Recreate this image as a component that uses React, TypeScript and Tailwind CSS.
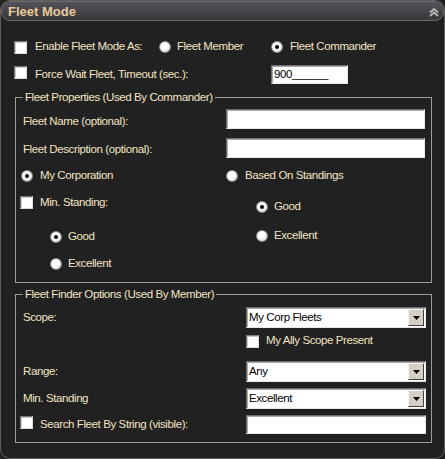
import React from "react"

const font = { fontFamily: '"Liberation Sans", Arial, sans-serif' }

function Check({ className = "" }: { className?: string }) {
  return (
    <span
      className={`inline-block w-[13px] h-[13px] shrink-0 bg-white border border-t-[#7a7a7a] border-l-[#7a7a7a] border-b-[#dcdcdc] border-r-[#dcdcdc] shadow-[inset_1px_1px_0_#c8c8c8] ${className}`}
    />
  )
}

function Radio({ on = false }: { on?: boolean }) {
  return (
    <span className="relative inline-flex items-center justify-center w-[12px] h-[12px] shrink-0 rounded-full border border-[#8c8c8c] bg-[radial-gradient(circle_at_40%_35%,#ffffff_35%,#c9c9c9)]">
      {on && <span className="w-[4px] h-[4px] rounded-full bg-black" />}
    </span>
  )
}

function TextBox({ w, h, value = "" }: { w: string; h: string; value?: string }) {
  return (
    <div
      className={`${w} ${h} bg-white border border-t-[#6e6e6e] border-l-[#6e6e6e] border-b-[#e8e8e8] border-r-[#e8e8e8] shadow-[inset_1px_1px_0_#a8a8a8] text-black flex items-center pl-[2px]`}
    >
      {value}
    </div>
  )
}

function Select({ value }: { value: string }) {
  return (
    <div className="w-[180px] h-[21px] bg-white border border-t-[#6e6e6e] border-l-[#6e6e6e] border-b-[#e8e8e8] border-r-[#e8e8e8] shadow-[inset_1px_1px_0_#a8a8a8] flex items-center">
      <span className="flex-1 text-black pl-[2px]">{value}</span>
      <span className="w-[16px] h-[17px] mr-[1px] bg-[#d4d0c8] border border-t-[#f4f4f4] border-l-[#f4f4f4] border-b-[#404040] border-r-[#404040] flex items-center justify-center">
        <svg width="7" height="4" viewBox="0 0 7 4">
          <path d="M0 0h7L3.5 4z" fill="#000" />
        </svg>
      </span>
    </div>
  )
}

export default function App() {
  return (
    <div style={font} className="w-[445px] h-[459px] bg-[#212121] text-[#f4e4c4] text-[11.5px] tracking-[-0.4px] leading-none select-none">
      <div className="h-[459px] flex flex-col border border-[#5e5e5e] rounded-[10px] overflow-hidden">
        {/* header */}
        <div className="h-[20px] shrink-0 flex items-center justify-between rounded-[9px] border border-[#6a6a6a] bg-gradient-to-b from-[#56525a] to-[#38363a] pl-[6px] pr-[4px]">
          <span className="text-[13px] tracking-normal font-bold text-[#e6ca9c]">Fleet Mode</span>
          <svg width="10" height="9" viewBox="0 0 10 9" className="mt-[2px]">
            <path d="M1 4.5L5 1l4 3.5M1 8L5 4.5 9 8" stroke="#b8b8b8" strokeWidth="1.8" fill="none" />
          </svg>
        </div>

        {/* row 1 */}
        <div className="h-[16px] mt-[18px] flex items-center pl-[13px]">
          <Check />
          <span className="ml-[8px] w-[124px]">Enable Fleet Mode As:</span>
          <Radio />
          <span className="ml-[6px] w-[94px]">Fleet Member</span>
          <Radio on />
          <span className="ml-[7px]">Fleet Commander</span>
        </div>

        {/* row 2 */}
        <div className="h-[19px] mt-[10px] flex items-center pl-[13px]">
          <Check className="-mt-[4px]" />
          <span className="ml-[8px] w-[236px]">Force Wait Fleet, Timeout (sec.):</span>
          <TextBox w="w-[77px]" h="h-[19px]" value="900______" />
        </div>

        {/* fleet properties */}
        <fieldset className="ml-[14px] mt-[6px] w-[417px] border border-[#9c9c9c] px-0 pb-[10px]">
          <legend className="ml-[7px] px-[2px] h-[14px] leading-[14px]">Fleet Properties (Used By Commander)</legend>
          <div className="h-[20px] mt-[5px] flex items-center">
            <span className="pl-[7px] w-[210px] mt-[6px]">Fleet Name (optional):</span>
            <TextBox w="w-[199px]" h="h-[20px]" />
          </div>
          <div className="h-[20px] mt-[9px] flex items-center">
            <span className="pl-[7px] w-[210px] mt-[4px]">Fleet Description (optional):</span>
            <TextBox w="w-[199px]" h="h-[20px]" />
          </div>
          <div className="h-[16px] mt-[10px] flex items-center pl-[5px]">
            <Radio on />
            <span className="ml-[7px] w-[186px]">My Corporation</span>
            <Radio />
            <span className="ml-[7px]">Based On Standings</span>
          </div>
          <div className="flex">
            <div className="w-[210px] flex flex-col">
              <div className="h-[16px] mt-[11px] flex items-center pl-[4px]">
                <Check className="-mt-[2px]" />
                <span className="ml-[7px]">Min. Standing:</span>
              </div>
              <div className="h-[16px] mt-[18px] flex items-center pl-[34px]">
                <Radio on />
                <span className="ml-[6px]">Good</span>
              </div>
              <div className="h-[16px] mt-[11px] flex items-center pl-[34px]">
                <Radio />
                <span className="ml-[6px]">Excellent</span>
              </div>
            </div>
            <div className="flex flex-col">
              <div className="h-[16px] mt-[15px] flex items-center pl-[30px]">
                <Radio on />
                <span className="ml-[6px]">Good</span>
              </div>
              <div className="h-[16px] mt-[13px] flex items-center pl-[30px]">
                <Radio />
                <span className="ml-[6px]">Excellent</span>
              </div>
            </div>
          </div>
        </fieldset>

        {/* fleet finder */}
        <fieldset className="ml-[14px] mt-[4px] w-[417px] border border-[#9c9c9c] px-0 pb-[8px]">
          <legend className="ml-[7px] px-[2px] h-[14px] leading-[14px]">Fleet Finder Options (Used By Member)</legend>
          <div className="h-[21px] mt-[6px] flex items-center">
            <span className="pl-[7px] w-[230px]">Scope:</span>
            <Select value="My Corp Fleets" />
          </div>
          <div className="h-[14px] mt-[6px] flex items-center pl-[230px]">
            <Check />
            <span className="ml-[7px]">My Ally Scope Present</span>
          </div>
          <div className="h-[21px] mt-[13px] flex items-center">
            <span className="pl-[7px] w-[230px]">Range:</span>
            <Select value="Any" />
          </div>
          <div className="h-[21px] mt-[6px] flex items-center">
            <span className="pl-[7px] w-[230px]">Min. Standing</span>
            <Select value="Excellent" />
          </div>
          <div className="h-[19px] mt-[6px] flex items-center pl-[4px]">
            <Check className="-mt-[4px]" />
            <span className="ml-[7px] w-[206px]">Search Fleet By String (visible):</span>
            <TextBox w="w-[180px]" h="h-[19px]" />
          </div>
        </fieldset>
      </div>
    </div>
  )
}
